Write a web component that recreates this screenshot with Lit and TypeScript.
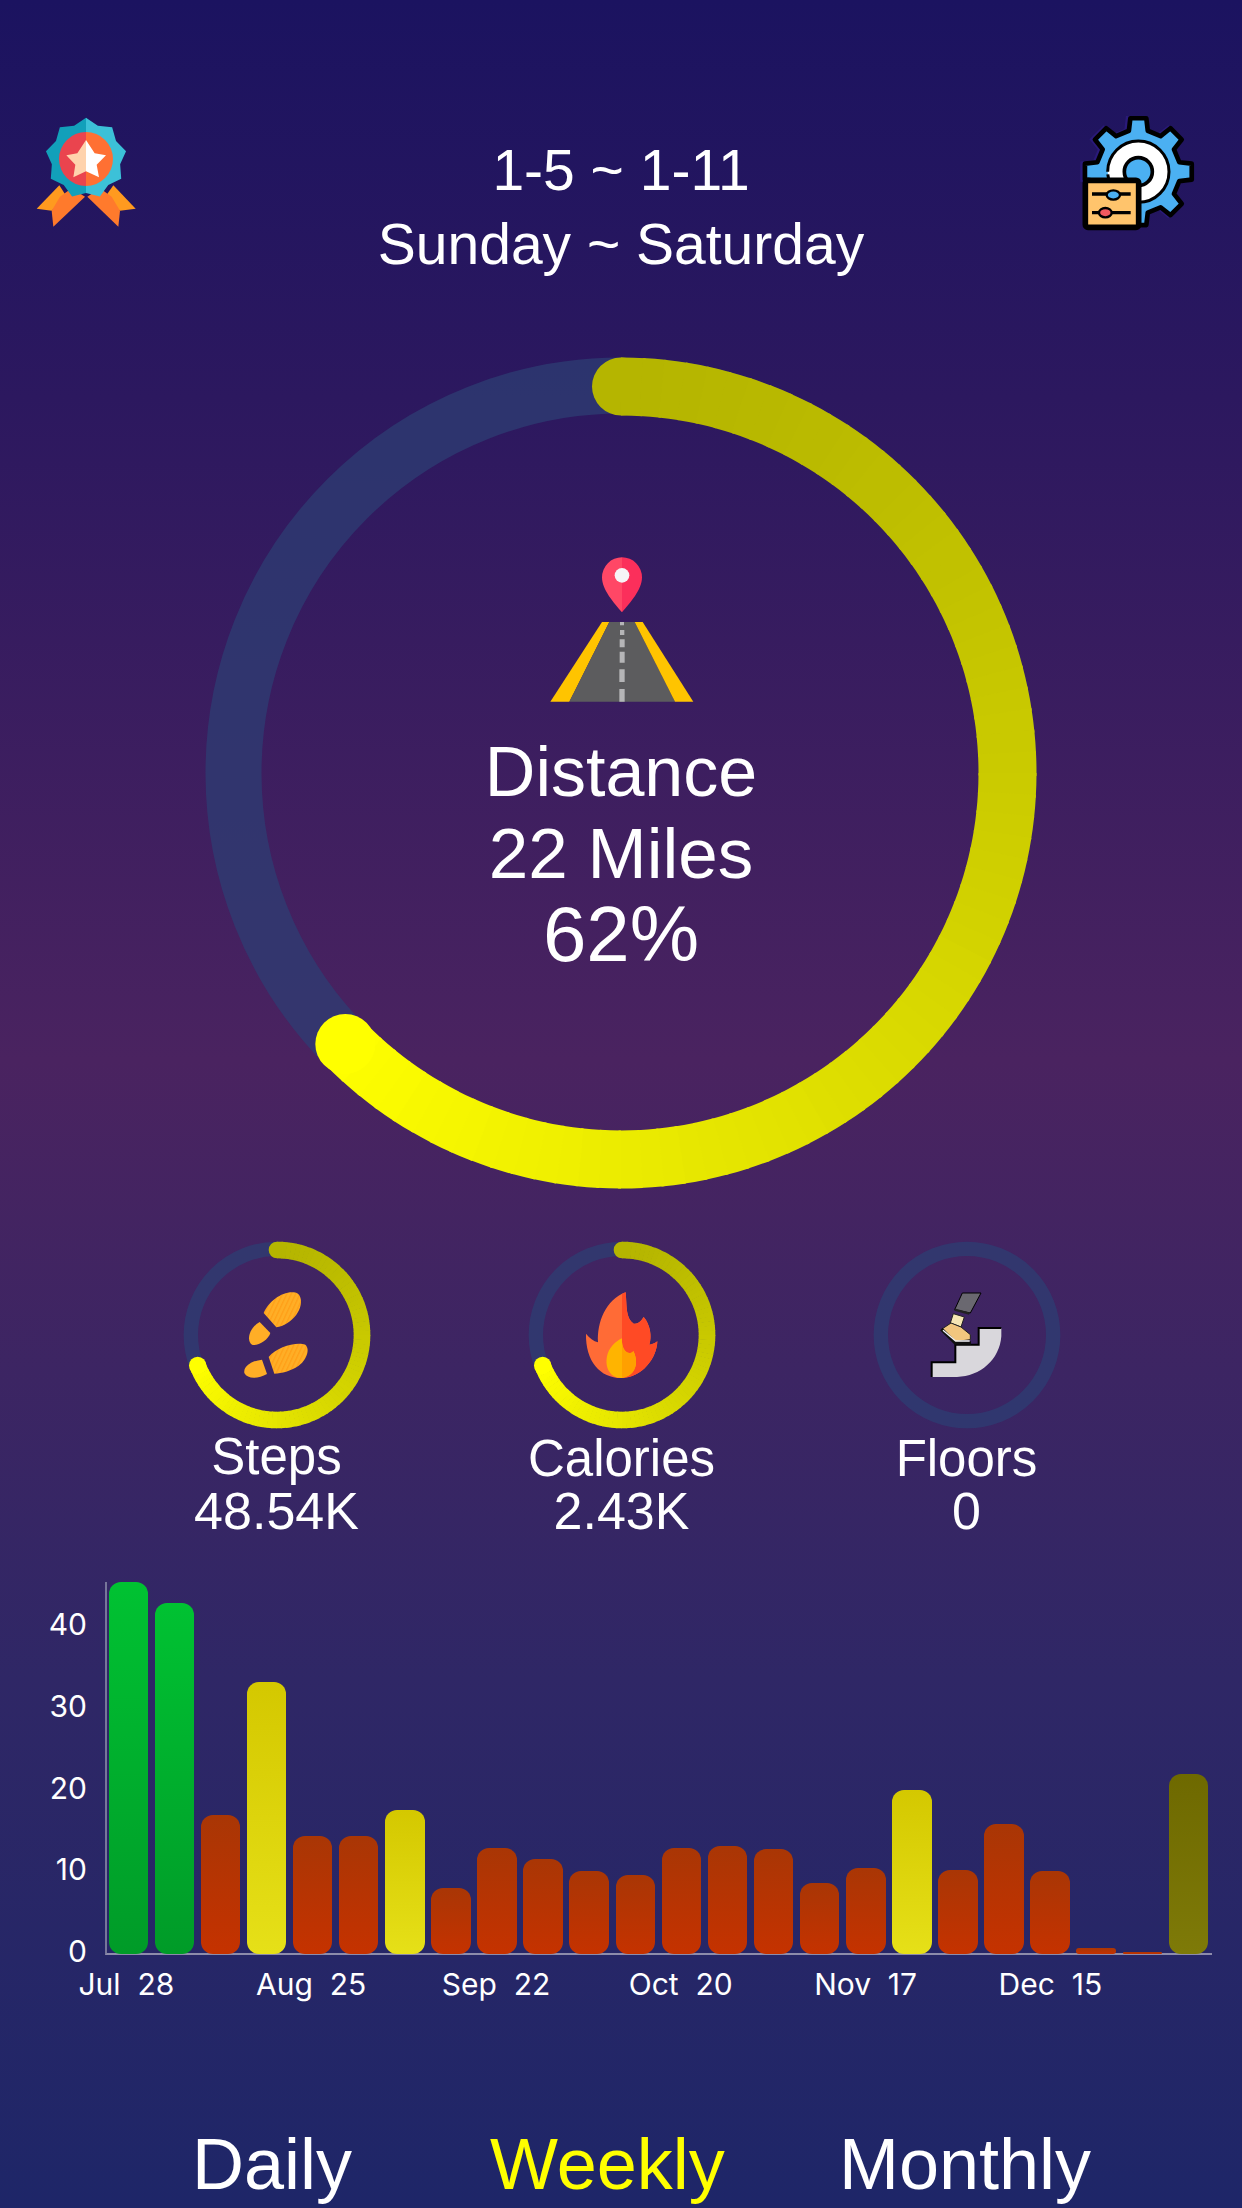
import { LitElement, html, css, svg } from 'lit';
import { customElement } from 'lit/decorators.js';

// bar heights in px above the axis, kind picks the colour
const BARS: [number, string][] = [
  [372, 'green'], [351, 'green'], [139, 'red'], [272, 'yellow'], [118, 'red'], [118, 'red'],
  [144, 'yellow'], [66, 'red'], [106, 'red'], [95, 'red'], [83, 'red'], [79, 'red'],
  [106, 'red'], [108, 'red'], [105, 'red'], [71, 'red'], [86, 'red'], [164, 'yellow'],
  [84, 'red'], [130, 'red'], [83, 'red'], [6, 'red'], [2, 'red'], [180, 'olive'],
];
const Y_LABELS = ['40', '30', '20', '10', '0'];
const X_LABELS = ['Jul  28', 'Aug  25', 'Sep  22', 'Oct  20', 'Nov  17', 'Dec  15'];

function ringColor(t: number) {
  const v = Math.round(0xb5 + (0xff - 0xb5) * Math.pow(t, 1.3));
  return `rgb(${v},${v},0)`;
}

function point(cx: number, cy: number, r: number, deg: number) {
  const a = ((deg - 90) * Math.PI) / 180;
  return [cx + r * Math.cos(a), cy + r * Math.sin(a)];
}

// track plus a progress arc whose colour shifts along its length, round at both ends
function ring(cx: number, cy: number, trackR: number, trackW: number, r: number, sw: number, end: number) {
  const parts = [];
  const step = 3;
  if (end > 0) {
    const [sx, sy] = point(cx, cy, r, 0);
    const [ex, ey] = point(cx, cy, r, end);
    parts.push(svg`<circle cx=${sx} cy=${sy} r=${sw / 2} fill=${ringColor(0)}></circle>`);
    for (let a = 0; a < end; a += step) {
      const b = Math.min(a + step + 0.4, end);
      const [x1, y1] = point(cx, cy, r, a);
      const [x2, y2] = point(cx, cy, r, b);
      parts.push(svg`<path d="M${x1} ${y1}A${r} ${r} 0 0 1 ${x2} ${y2}" fill="none" stroke=${ringColor(a / end)} stroke-width=${sw}></path>`);
    }
    parts.push(svg`<circle cx=${ex} cy=${ey} r=${sw / 2 + 1} fill=${ringColor(1)}></circle>`);
  }
  return svg`<circle cx=${cx} cy=${cy} r=${trackR} fill="none" stroke="rgba(45,62,115,.75)" stroke-width=${trackW}></circle>${parts}`;
}

function gearPoints(cx: number, cy: number) {
  const pts: string[] = [];
  for (let i = 0; i < 8; i++) {
    const a = i * 45;
    for (const [r, d] of [[126, -13], [162, -8.5], [162, 8.5], [126, 13]]) {
      const [x, y] = point(cx, cy, r, a + d);
      pts.push(`${x},${y}`);
    }
  }
  return pts.join(' ');
}

// one half of the nine pointed medal edge, side is 1 for right, -1 for left
function medalHalf(side: number) {
  const pts: string[] = [];
  for (let i = 0; i <= 9; i++) {
    const r = i % 2 ? 104 : 122;
    const [x, y] = point(258, 235, r, side * i * 20);
    pts.push(`${x},${y}`);
  }
  return pts.join(' ');
}

const medalIcon = html`<svg class="icon" width="192" height="180" viewBox="0 0 576 540">
  <path d="M178 316L110 386L155 392L200 350Z" fill="#ff9a1f"/>
  <path d="M155 392L160 440L255 350L215 325L180 350Z" fill="#ff7a2c"/>
  <path d="M340 316L407 386L360 392L316 350Z" fill="#ff9a1f"/>
  <path d="M360 392L355 440L262 350L300 325L335 350Z" fill="#ff7a2c"/>
  <polygon points=${medalHalf(-1)} fill="#12a0ba"/>
  <polygon points=${medalHalf(1)} fill="#3cc1d8"/>
  <path d="M258 156A81 81 0 0 0 258 318Z" fill="#ea444e"/>
  <path d="M258 156A81 81 0 0 1 258 318Z" fill="#ff7033"/>
  <path d="M258 180L232 220L199 226L226 254L220 292L258 274Z" fill="#ffd3ad"/>
  <path d="M258 180L284 220L318 226L290 254L297 292L258 274Z" fill="#fff"/>
</svg>`;

const gearIcon = html`<svg class="icon gear" width="192" height="160" viewBox="0 0 576 480">
  <polygon points=${gearPoints(258, 245)} fill="#2a1a7a" stroke="#2a1a7a" stroke-width="14"/>
  <polygon points=${gearPoints(265, 245)} fill="#4bb0f2" stroke="#000" stroke-width="14" stroke-linejoin="round"/>
  <circle cx="265" cy="245" r="92" fill="#fff" stroke="#000" stroke-width="9" stroke-dasharray="280 8 290"/>
  <circle cx="265" cy="245" r="42" fill="#4bb0f2" stroke="#000" stroke-width="11"/>
  <rect x="106" y="271" width="160" height="141" rx="8" fill="#ffc46c" stroke="#000" stroke-width="17"/>
  <path d="M126 312H242M126 368H242" stroke="#000" stroke-width="10"/>
  <ellipse cx="190" cy="315" rx="20" ry="14" fill="#4bb0f2" stroke="#000" stroke-width="7"/>
  <ellipse cx="166" cy="368" rx="19" ry="14" fill="#f2595f" stroke="#000" stroke-width="7"/>
</svg>`;

const roadIcon = html`<svg class="road" width="200" height="180" viewBox="0 0 600 540">
  <path d="M303 52A60 60 0 0 0 243 112C243 150 280 190 303 217Z" fill="#ff4766"/>
  <path d="M303 52A60 60 0 0 1 363 112C363 150 326 190 303 217Z" fill="#fb2f5b"/>
  <circle cx="303" cy="106" r="22" fill="#f6f4f6"/>
  <path d="M243 246H265L145 485H88Z" fill="#ffc400"/>
  <path d="M265 246H341L462 485H145Z" fill="#5c5c5e"/>
  <path d="M341 246H365L517 485H462Z" fill="#ffc400"/>
  <path d="M297 246h12v10h-12zM297 270h13v15h-13zM296 298h15v24h-15zM296 335h15v33h-15zM295 388h16v38h-16zM295 447h16v38h-16z" fill="#b5b5b7"/>
</svg>`;

const shoesIcon = svg`
  <defs><pattern id="sole" width="12" height="12" patternUnits="userSpaceOnUse" patternTransform="rotate(25)">
    <rect width="12" height="12" fill="#ffae26"/><rect width="4" height="12" fill="#ffa018"/>
  </pattern></defs>
  <path d="M280 250C295 215 335 185 370 188C398 190 398 230 378 255C362 275 340 290 318 293Z" fill="url(#sole)"/>
  <path d="M268 277L300 310C295 330 262 350 245 345C228 335 235 295 268 277Z" fill="#ffae26"/>
  <path d="M295 382C320 350 380 335 405 345C422 360 405 395 385 408C360 425 335 430 312 432Z" fill="url(#sole)"/>
  <path d="M275 390L290 433C265 447 232 450 222 430C218 408 250 392 275 390Z" fill="#ffae26"/>`;

const FLAME = 'M331 188C335 230 330 265 355 282C370 285 380 270 385 262C405 285 410 320 402 345C410 345 420 340 426 335C425 385 380 445 318 445C255 445 210 395 212 312C222 325 235 335 248 338C245 280 270 210 331 188Z';
const INNER = 'M320 326C318 350 328 372 345 370C350 369 352 367 354 364C372 400 360 440 318 445C285 445 268 415 275 380C280 355 300 335 320 326Z';
const flameIcon = svg`
  <defs><clipPath id="half"><rect x="320" y="150" width="130" height="320"/></clipPath></defs>
  <path d=${FLAME} fill="#ff6b36"/>
  <path d=${FLAME} fill="#ff4a25" clip-path="url(#half)"/>
  <path d=${INNER} fill="#ffb400"/>
  <path d=${INNER} fill="#ffa000" clip-path="url(#half)"/>`;

const stairsIcon = svg`
  <path d="M214 442V398H285V345H355V295H423V320C418 390 360 440 290 442Z" fill="#d9d7dc"/>
  <path d="M214 442V398H285V345H355V295H423" fill="none" stroke="#000" stroke-width="6"/>
  <path d="M306 190H362L330 250L283 240Z" fill="#6a6870" stroke="#000" stroke-width="3"/>
  <path d="M283 240L327 252" stroke="#222" stroke-width="7"/>
  <path d="M279 252L312 262L302 292L270 280Z" fill="#f6e6b4" stroke="#222" stroke-width="3"/>
  <path d="M245 298L272 280L302 292L330 315V330L285 336Z" fill="#f2c67e" stroke="#222" stroke-width="3"/>
  <path d="M243 298L285 340H332" fill="none" stroke="#111" stroke-width="10"/>
  <path d="M248 302L286 334H328" fill="none" stroke="#f5f5f5" stroke-width="4"/>`;

const STATS = [
  { name: 'Steps', value: '48.54K', end: 249, icon: shoesIcon, cls: 'lift' },
  { name: 'Calories', value: '2.43K', end: 249, icon: flameIcon, cls: '' },
  { name: 'Floors', value: '0', end: 0, icon: stairsIcon, cls: '' },
];

@customElement('app-root')
export class AppRoot extends LitElement {
  static styles = css`
    :host {
      display: block;
    }
    .page {
      width: 1242px;
      height: 2208px;
      overflow: hidden;
      color: #fff;
      font-family: 'Liberation Sans', Arial, sans-serif;
      background: linear-gradient(180deg, #1b1360 0%, #2c185f 18%, #4a2360 48%, #2f2766 76%, #1e2668 100%);
    }
    svg {
      display: block;
    }
    .header {
      display: grid;
      grid-template-columns: 192px 1fr 192px;
      padding-top: 80px;
    }
    .gear {
      margin-top: 10px;
    }
    .title {
      margin-top: 53px;
      text-align: center;
      font-size: 57px;
      line-height: 74px;
    }
    .dial {
      display: grid;
      justify-items: center;
      margin-top: 76px;
    }
    .dial > * {
      grid-area: 1 / 1;
    }
    .dial-center {
      display: flex;
      flex-direction: column;
      align-items: center;
      padding-top: 183px;
      font-size: 70px;
      line-height: 81px;
    }
    .road {
      margin-bottom: 12px;
    }
    .miles {
      font-size: 71px;
    }
    .percent {
      font-size: 78px;
    }
    .stats {
      display: grid;
      grid-template-columns: repeat(3, 345px);
      padding-left: 104px;
      margin-top: 51px;
      text-align: center;
      font-size: 51px;
      line-height: 53px;
    }
    .stat svg {
      margin: 0 auto 2px;
    }
    .value {
      font-size: 52px;
    }
    .lift .label {
      margin: -2px 0 2px;
    }
    .chart {
      display: grid;
      grid-template-columns: 87px 1fr;
      column-gap: 18px;
      padding-right: 30px;
      margin-top: 44px;
      font-family: Inter, 'Liberation Sans', sans-serif;
      font-size: 30px;
    }
    .y-axis {
      height: 373px;
      padding-top: 2px;
      box-sizing: border-box;
      text-align: right;
      line-height: 81.8px;
    }
    .plot {
      display: grid;
      grid-template-columns: repeat(24, 39.5px);
      column-gap: 6.6px;
      align-items: end;
      height: 373px;
      box-sizing: border-box;
      padding-left: 1.5px;
      border-left: 2px solid #77769a;
      border-bottom: 2px solid #8d8cab;
    }
    .bar {
      border-radius: 12px;
    }
    .green {
      background: linear-gradient(180deg, #00c232, #009b28);
    }
    .red {
      background: linear-gradient(180deg, #a93605, #c53200);
    }
    .yellow {
      background: linear-gradient(180deg, #d4c800, #e6e018);
    }
    .olive {
      background: linear-gradient(180deg, #6e6900, #7e7a08);
    }
    .x-axis {
      grid-column: 1 / 3;
      display: flex;
      padding-left: 34px;
      margin-top: 9px;
      line-height: 40px;
    }
    .x-axis span {
      width: 184.8px;
      text-align: center;
      white-space: pre;
    }
    .tabs {
      display: grid;
      grid-template-columns: 298px 349px auto;
      padding-left: 192px;
      margin-top: 120px;
      font-size: 72px;
      line-height: 80px;
    }
    .active {
      color: #ffff00;
    }
  `;

  render() {
    return html`
      <div class="page">
        <div class="header">
          ${medalIcon}
          <div class="title">
            <div>1-5 ~ 1-11</div>
            <div>Sunday ~ Saturday</div>
          </div>
          ${gearIcon}
        </div>

        <div class="dial">
          <svg width="832" height="832" viewBox="0 0 832 832">${ring(416, 416, 387.5, 56, 386.5, 58, 225.5)}</svg>
          <div class="dial-center">
            ${roadIcon}
            <div>Distance</div>
            <div class="miles">22 Miles</div>
            <div class="percent">62%</div>
          </div>
        </div>

        <div class="stats">
          ${STATS.map(
            (s) => html`
              <div class="stat ${s.cls}">
                <svg width="190" height="190" viewBox="35 31 570 570">
                  ${ring(320, 316, 258.5, 43, 255, 50, s.end)}${s.icon}
                </svg>
                <div class="label">${s.name}</div>
                <div class="value">${s.value}</div>
              </div>
            `
          )}
        </div>

        <div class="chart">
          <div class="y-axis">${Y_LABELS.map((l) => html`<div>${l}</div>`)}</div>
          <div class="plot">
            ${BARS.map(([h, kind]) => html`<div class="bar ${kind}" style="height:${h}px"></div>`)}
          </div>
          <div class="x-axis">${X_LABELS.map((l) => html`<span>${l}</span>`)}</div>
        </div>

        <div class="tabs">
          <div>Daily</div>
          <div class="active">Weekly</div>
          <div>Monthly</div>
        </div>
      </div>
    `;
  }
}
